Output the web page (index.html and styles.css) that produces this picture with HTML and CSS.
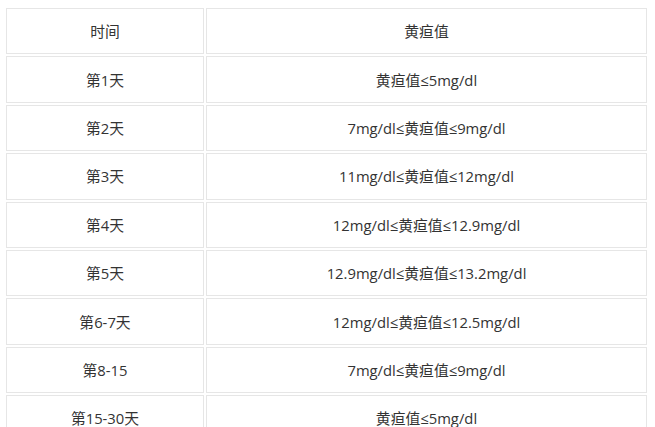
FILE: index.html
```html
<!DOCTYPE html>
<html lang="zh-CN">
<head>
<meta charset="utf-8">
<title>黄疸值</title>
<link rel="stylesheet" href="styles.css">
</head>
<body>
<table class="tbl">
  <tr><td class="c1">时间</td><td class="c2">黄疸值</td></tr>
  <tr><td class="c1">第1天</td><td class="c2">黄疸值≤5mg/dl</td></tr>
  <tr><td class="c1">第2天</td><td class="c2">7mg/dl≤黄疸值≤9mg/dl</td></tr>
  <tr><td class="c1">第3天</td><td class="c2">11mg/dl≤黄疸值≤12mg/dl</td></tr>
  <tr><td class="c1">第4天</td><td class="c2">12mg/dl≤黄疸值≤12.9mg/dl</td></tr>
  <tr><td class="c1">第5天</td><td class="c2">12.9mg/dl≤黄疸值≤13.2mg/dl</td></tr>
  <tr><td class="c1">第6-7天</td><td class="c2">12mg/dl≤黄疸值≤12.5mg/dl</td></tr>
  <tr><td class="c1">第8-15</td><td class="c2">7mg/dl≤黄疸值≤9mg/dl</td></tr>
  <tr><td class="c1">第15-30天</td><td class="c2">黄疸值≤5mg/dl</td></tr>
</table>
</body>
</html>
```
FILE: styles.css
```css
html, body {
  margin: 0;
  padding: 0;
  background: #ffffff;
}
body {
  font-family: "Open Sans", "Noto Sans CJK SC", sans-serif;
  font-size: 14.8px;
  color: #333333;
}
.tbl {
  margin: 6px 0 0 4px;
  border-collapse: separate;
  border-spacing: 2px;
}
.tbl td {
  border: 1px solid #e6e6e6;
  padding: 0;
  height: 44.4px;
  text-align: center;
  vertical-align: middle;
  line-height: 20px;
}
.tbl .c1 {
  width: 196px;
}
.tbl .c2 {
  width: 439px;
}
```
